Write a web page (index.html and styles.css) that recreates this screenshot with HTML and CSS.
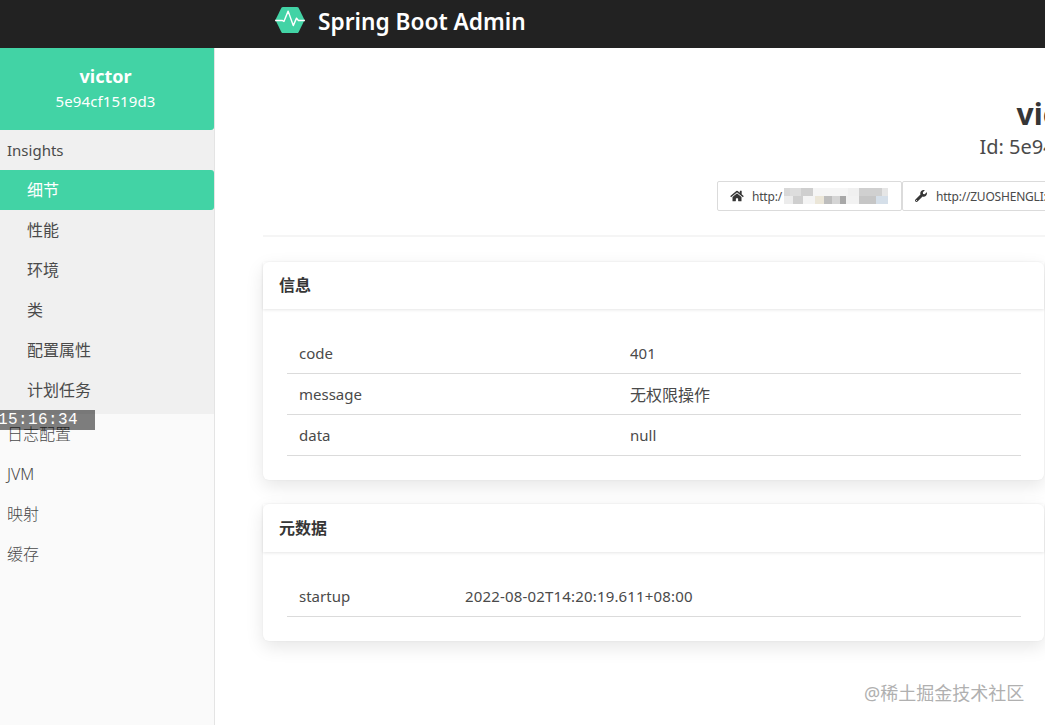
FILE: index.html
```html
<!DOCTYPE html>
<html lang="zh">
<head>
<meta charset="utf-8">
<title>Spring Boot Admin</title>
<link rel="stylesheet" href="styles.css">
</head>
<body>
<div class="app">
  <header class="navbar">
    <svg class="logo" viewBox="0 0 32 30" aria-hidden="true">
      <path class="logo-hex" d="M8.5 1h15a2 2 0 0 1 1.700 1L31.600 15l-6.400 13a2 2 0 0 1-1.700 1h-15a2 2 0 0 1-1.700-1L.4 15 6.800 2a2 2 0 0 1 1.700-1z"/>
      <path class="logo-pulse" d="M0 15.500H7.500L9.500 16.500L14 5.500L19.500 21L23 13L25 15.500H32"/>
    </svg>
    <span class="brand">Spring Boot Admin</span>
  </header>
  <div class="layout">
    <aside class="sidebar">
      <div class="instance">
        <div class="instance-name">victor</div>
        <div class="instance-id">5e94cf1519d3</div>
      </div>
      <div class="group">
        <div class="nav-item">Insights</div>
        <div class="nav-item sub active">细节</div>
        <div class="nav-item sub">性能</div>
        <div class="nav-item sub">环境</div>
        <div class="nav-item sub">类</div>
        <div class="nav-item sub">配置属性</div>
        <div class="nav-item sub">计划任务</div>
      </div>
      <div class="nav-item lower cjk">日志配置</div>
      <div class="nav-item lower">JVM</div>
      <div class="nav-item lower cjk">映射</div>
      <div class="nav-item lower cjk">缓存</div>
    </aside>
    <main class="main">
      <section class="hero">
        <h1 class="hero-title">victor</h1>
        <p class="hero-id">Id: 5e94cf1519d3</p>
        <div class="links">
          <a class="link link-home">
            <svg class="icon icon-home" viewBox="0 0 576 512" aria-hidden="true"><path d="M280.37 148.26L96 300.11V464a16 16 0 0 0 16 16l112.06-.29a16 16 0 0 0 15.92-16V368a16 16 0 0 1 16-16h64a16 16 0 0 1 16 16v95.64a16 16 0 0 0 16 16.05L464 480a16 16 0 0 0 16-16V300L295.67 148.26a12.19 12.19 0 0 0-15.3 0zM571.6 251.47L488 182.56V44.05a12 12 0 0 0-12-12h-56a12 12 0 0 0-12 12v72.61L318.47 43a48 48 0 0 0-61 0L4.34 251.47a12 12 0 0 0-1.6 16.9l25.5 31A12 12 0 0 0 45.15 301l235.22-193.74a12.19 12.19 0 0 1 15.3 0L530.9 301a12 12 0 0 0 16.9-1.6l25.5-31a12 12 0 0 0-1.7-16.93z"/></svg>
            <span>http:/</span><span class="blurred"></span>
          </a>
          <a class="link link-mgmt">
            <svg class="icon icon-wrench" viewBox="0 0 512 512" aria-hidden="true"><path d="M507.73 109.1c-2.24-9.03-13.54-12.09-20.12-5.51l-74.36 74.36-67.88-11.31-11.31-67.88 74.36-74.36c6.62-6.62 3.43-17.9-5.66-20.16-47.38-11.74-99.55.91-136.58 37.93-39.64 39.64-50.55 97.1-34.05 147.2L18.74 402.76c-24.99 24.99-24.99 65.51 0 90.5 24.99 24.99 65.51 24.99 90.5 0l213.21-213.21c50.12 16.71 107.47 5.68 147.37-34.22 37.07-37.07 49.7-89.32 37.91-136.73zM64 472c-13.25 0-24-10.75-24-24 0-13.26 10.75-24 24-24s24 10.74 24 24c0 13.25-10.75 24-24 24z"/></svg>
            <span>http://ZUOSHENGLI:8080/actuator</span>
          </a>
        </div>
      </section>
      <hr class="rule">
      <section class="card">
        <h2 class="card-title">信息</h2>
        <div class="card-body">
          <div class="row row-info"><span>code</span><span>401</span></div>
          <div class="row row-info"><span>message</span><span class="value-cjk">无权限操作</span></div>
          <div class="row row-info"><span>data</span><span>null</span></div>
        </div>
      </section>
      <section class="card">
        <h2 class="card-title">元数据</h2>
        <div class="card-body">
          <div class="row row-meta"><span>startup</span><span class="meta-value">2022-08-02T14:20:19.611+08:00</span></div>
        </div>
      </section>
    </main>
  </div>
</div>
<div class="clock">15:16:34</div>
<div class="watermark">@稀土掘金技术社区</div>
</body>
</html>
```

FILE: styles.css
```css
* {
  box-sizing: border-box;
}

html,
body {
  margin: 0;
  height: 725px;
  overflow: hidden;
  background: #fff;
}

body {
  position: relative;
  width: 1045px;
  font-family: "Noto Sans", "Noto Sans CJK SC", sans-serif;
  font-size: 15px;
  color: #4a4a4a;
}

.app {
  display: flex;
  flex-direction: column;
  height: 725px;
}

.navbar {
  flex: none;
  display: flex;
  align-items: center;
  gap: 13px;
  height: 48px;
  padding: 0 0 6px 275px;
  background: #222;
}

.logo {
  width: 30px;
  height: 28px;
  margin-top: -2px;
}

.logo-hex {
  fill: #42d3a5;
}

.logo-pulse {
  fill: none;
  stroke: #fff;
  stroke-width: 1.500;
  stroke-linejoin: round;
}

.brand {
  font-size: 22.700px;
  font-weight: 600;
  color: #fff;
  white-space: nowrap;
}

.layout {
  flex: 1;
  display: flex;
  min-height: 0;
}

.sidebar {
  flex: none;
  width: 215px;
  background: #fafafa;
  border-right: 1px solid #e4e4e4;
}

.instance {
  height: 82px;
  padding: 16px 3px 0 0;
  background: #42d3a5;
  color: #fff;
  text-align: center;
  border-bottom-right-radius: 3px;
}

.instance-name {
  font-size: 18px;
  font-weight: 700;
  line-height: 24px;
}

.instance-id {
  font-size: 15px;
  line-height: 26px;
  letter-spacing: 0.1px;
}

.group {
  height: 284px;
  background: #f0f0f0;
}

.nav-item {
  display: flex;
  align-items: center;
  height: 40px;
  padding: 0 0 1px 7px;
  font-size: 15px;
}

.nav-item.sub {
  padding: 0 0 3px 27px;
  font-size: 16px;
}

.nav-item.lower {
  font-size: 16px;
  font-weight: 300;
}

.nav-item.cjk {
  padding-bottom: 3px;
}

.nav-item.active {
  background: #42d3a5;
  color: #fff;
  border-radius: 0 3px 3px 0;
}

.main {
  flex: none;
  width: 1690px;
  padding: 0 0 0 48px;
}

.hero {
  width: 1594px;
  height: 187px;
  padding-top: 43px;
  text-align: center;
}

.hero-title {
  margin: 0;
  font-size: 30px;
  font-weight: 700;
  line-height: 45px;
  color: #363636;
}

.hero-id {
  margin: 0;
  font-size: 20px;
  line-height: 22px;
}

.links {
  display: flex;
  justify-content: center;
  margin-top: 23px;
}

.link {
  display: flex;
  align-items: center;
  height: 30px;
  background: #fff;
  border: 1px solid #dbdbdb;
  border-radius: 2px;
  font-size: 12px;
  letter-spacing: -0.2px;
  color: #4a4a4a;
  white-space: nowrap;
}

.link-home {
  width: 185px;
  padding-left: 12px;
}

.link-mgmt {
  width: 501px;
  padding-left: 12px;
}

.icon {
  flex: none;
  height: 12px;
  fill: #363636;
}

.icon-home {
  width: 14px;
  margin-right: 8px;
}

.icon-wrench {
  width: 12px;
  margin-right: 9px;
}

.blurred {
  width: 104px;
  height: 16px;
  margin-left: 2px;
  background:
    linear-gradient(90deg, #ececec 0 9%, #cfcfcf 9% 18%, #f4f4f4 18% 30%, #ebe6d8 30% 38%, #bdbdbd 38% 46%, #d5d5d5 46% 54%, #a8a8a8 54% 60%, #f2f2f2 60% 72%, #c6c6c6 72% 88%, #d5dfe9 88% 100%) bottom / 100% 50% no-repeat,
    linear-gradient(90deg, #d8d8d8 0 6%, #dddddd 6% 16%, #cfcfcf 16% 28%, #f5f5f5 28% 62%, #f0f0f0 62% 72%, #d0d0d0 72% 94%, #e6e6e6 94% 100%) top / 100% 50% no-repeat;
  filter: blur(0.7px);
}

.rule {
  width: 782px;
  height: 2px;
  margin: 0;
  background: #f5f5f5;
  border: 0;
}

.card {
  width: 781px;
  margin-top: 25px;
  background: #fff;
  border-radius: 6px;
  box-shadow: 0 6px 18px rgba(0, 0, 0, 0.1), 0 0 2px rgba(0, 0, 0, 0.06);
}

.card + .card {
  margin-top: 24px;
}

.card-title {
  display: flex;
  align-items: center;
  height: 47px;
  margin: 0;
  padding: 0 0 3px 16px;
  font-size: 16px;
  font-weight: 700;
  color: #363636;
  box-shadow: 0 1px 3px rgba(0, 0, 0, 0.1);
}

.card + .card .card-title {
  height: 48px;
  padding-bottom: 2px;
}

.card-body {
  padding: 24px 23px 24px 24px;
}

.row {
  display: grid;
  align-items: center;
  height: 41px;
  padding-left: 12px;
  border-bottom: 1px solid #dbdbdb;
}

.row-info {
  grid-template-columns: 331px 1fr;
}

.row-meta {
  grid-template-columns: 166px 1fr;
}

.value-cjk {
  font-size: 16px;
}

.meta-value {
  letter-spacing: 0.17px;
}

.clock {
  position: absolute;
  left: 0;
  top: 410px;
  width: 95px;
  height: 20px;
  background: rgba(0, 0, 0, 0.5);
  color: #fff;
  font-family: "Liberation Mono", monospace;
  font-size: 16px;
  letter-spacing: 0.4px;
  line-height: 20px;
  text-indent: -2px;
  overflow: hidden;
}

.watermark {
  position: absolute;
  left: 864px;
  top: 681px;
  font-size: 18px;
  line-height: 24px;
  color: #b0b0b0;
  white-space: nowrap;
}
```
